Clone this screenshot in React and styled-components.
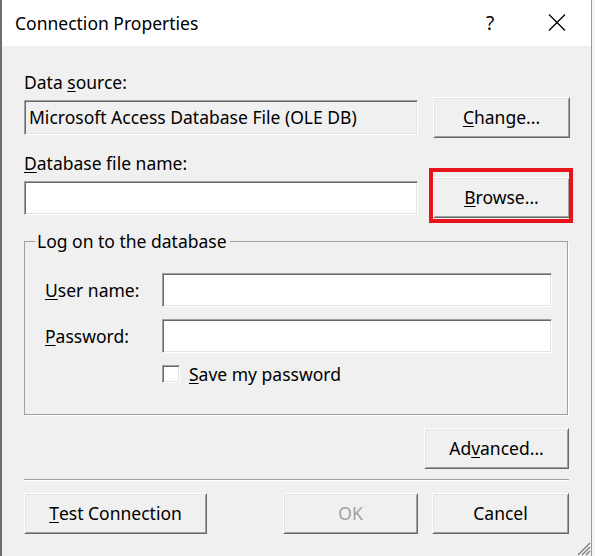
import React from "react";
import styled, { createGlobalStyle } from "styled-components";

const GlobalStyle = createGlobalStyle`
  html, body { margin: 0; padding: 0; background: #f4f4f4; }
  body {
    font-family: "Noto Sans", "Segoe UI", sans-serif;
    font-size: 17.5px;
    color: #000;
  }
  * { box-sizing: border-box; }
`;

const Window = styled.div`
  position: relative;
  display: flex;
  flex-direction: column;
  width: 592px;
  height: 556px;
  border-left: 2px solid #6e6e6e;
  border-right: 1px solid #9a9a9a;
  overflow: hidden;
`;

const TitleBar = styled.div`
  display: flex;
  align-items: center;
  height: 46px;
  background: #fff;
  padding-left: 13px;
  padding-bottom: 1px;
  flex-shrink: 0;
`;

const Title = styled.div`
  font-size: 17.5px;
  color: #000;
`;

const TitleActions = styled.div`
  margin-left: auto;
  display: flex;
  height: 100%;
`;

const TitleButton = styled.div`
  width: ${(p) => p.$w}px;
  display: flex;
  align-items: center;
  justify-content: center;
  font-size: 19px;
  color: #000;
`;

const Body = styled.div`
  flex: 1;
  background: #f0f0f0;
  padding: 26px 21px 0 22px;
  display: flex;
  flex-direction: column;
`;

const Label = styled.div`
  line-height: 20px;
  height: 20px;
  margin-top: ${(p) => p.$mt || 0}px;
  white-space: nowrap;
`;

const Mn = styled.span`
  text-decoration: underline;
  text-underline-offset: 2px;
  text-decoration-thickness: 1px;
`;

const FieldRow = styled.div`
  display: grid;
  grid-template-columns: 394px 1fr;
  column-gap: 15px;
  align-items: center;
  margin-top: ${(p) => p.$mt}px;
`;

const Field = styled.div`
  height: ${(p) => p.$h || 34}px;
  background: ${(p) => (p.$disabled ? "#f0f0f0" : "#fff")};
  border-top: 1px solid #a0a0a0;
  border-left: 1px solid #a0a0a0;
  border-bottom: 1px solid #fff;
  border-right: 1px solid #fff;
  box-shadow: inset 1px 1px 0 #696969, inset -1px -1px 0 #e3e3e3;
  display: flex;
  align-items: center;
  padding-left: 4px;
  padding-bottom: 1px;
  white-space: nowrap;
  overflow: hidden;
`;

const Button = styled.div`
  height: 41px;
  width: ${(p) => (p.$w ? `${p.$w}px` : "auto")};
  background: #f0f0f0;
  border-top: 1px solid #fff;
  border-left: 1px solid #fff;
  border-bottom: 1px solid #696969;
  border-right: 1px solid #696969;
  box-shadow: inset 1px 1px 0 #e3e3e3, inset -1px -1px 0 #a0a0a0;
  display: flex;
  align-items: center;
  justify-content: center;
  padding-bottom: 1px;
  color: ${(p) => (p.$disabled ? "#a0a0a0" : "#000")};
  white-space: nowrap;
`;

const Highlight = styled.div`
  position: relative;
  &::after {
    content: "";
    position: absolute;
    top: -9px;
    left: -4px;
    right: -3px;
    bottom: -5px;
    border: 4px solid #e8141c;
    pointer-events: none;
  }
`;

const Group = styled.fieldset`
  margin: 14px 2px 0 0;
  padding: 23px 15px 31px 20px;
  border: 1px solid #a0a0a0;
  box-shadow: 1px 1px 0 #fff;
  min-width: 0;
`;

const Legend = styled.legend`
  margin-left: -10px;
  padding: 0 3px 0 2px;
  line-height: 18px;
`;

const GroupGrid = styled.div`
  display: grid;
  grid-template-columns: 117px 390px;
  row-gap: 12px;
  align-items: center;
`;

const CheckRow = styled.label`
  grid-column: 2;
  display: flex;
  align-items: center;
  gap: 9px;
  height: 18px;
  line-height: 18px;
`;

const CheckBox = styled.span`
  width: 18px;
  height: 18px;
  flex-shrink: 0;
  background: #fff;
  border-top: 1px solid #a0a0a0;
  border-left: 1px solid #a0a0a0;
  border-bottom: 1px solid #fff;
  border-right: 1px solid #fff;
  box-shadow: inset 1px 1px 0 #696969, inset -1px -1px 0 #e3e3e3;
`;

const EndRow = styled.div`
  display: flex;
  justify-content: flex-end;
  margin-top: 13px;
  padding-right: 1px;
`;

const Separator = styled.div`
  margin-top: 10px;
  margin-right: 1px;
  border-top: 1px solid #a0a0a0;
  border-bottom: 1px solid #fff;
`;

const BottomRow = styled.div`
  display: flex;
  align-items: center;
  margin-top: 12px;
  padding-right: 1px;
`;

const ButtonGroup = styled.div`
  margin-left: auto;
  display: flex;
  gap: 14px;
`;

const Grip = styled.svg`
  position: absolute;
  right: 0;
  bottom: 0;
`;

export default function App() {
  return (
    <>
      <GlobalStyle />
      <Window>
        <TitleBar>
          <Title>Connection Properties</Title>
          <TitleActions>
            <TitleButton $w={66}>?</TitleButton>
            <TitleButton $w={68}>
              <svg width="18" height="17" viewBox="0 0 18 17">
                <path d="M1 0.5 L17 16.5 M17 0.5 L1 16.5" stroke="#000" strokeWidth="1.3" fill="none" />
              </svg>
            </TitleButton>
          </TitleActions>
        </TitleBar>
        <Body>
          <Label>
            Data <Mn>s</Mn>ource:
          </Label>
          <FieldRow $mt={5}>
            <Field $disabled $h={35}>Microsoft Access Database File (OLE DB)</Field>
            <Button>
              <Mn>C</Mn>hange...
            </Button>
          </FieldRow>
          <Label $mt={15}>
            <Mn>D</Mn>atabase file name:
          </Label>
          <FieldRow $mt={4}>
            <Field $h={34} />
            <Highlight>
              <Button>
                <Mn>B</Mn>rowse...
              </Button>
            </Highlight>
          </FieldRow>
          <Group>
            <Legend>Log on to the database</Legend>
            <GroupGrid>
              <Label>
                <Mn>U</Mn>ser name:
              </Label>
              <Field />
              <Label>
                <Mn>P</Mn>assword:
              </Label>
              <Field />
              <CheckRow>
                <CheckBox />
                <span>
                  <Mn>S</Mn>ave my password
                </span>
              </CheckRow>
            </GroupGrid>
          </Group>
          <EndRow>
            <Button $w={145}>
              Ad<Mn>v</Mn>anced...
            </Button>
          </EndRow>
          <Separator />
          <BottomRow>
            <Button $w={183}>
              <Mn>T</Mn>est Connection
            </Button>
            <ButtonGroup>
              <Button $w={135} $disabled>OK</Button>
              <Button $w={137}>Cancel</Button>
            </ButtonGroup>
          </BottomRow>
        </Body>
        <Grip width="16" height="16" viewBox="0 0 16 16">
          <path d="M15 3 L3 15 M15 7 L7 15 M15 11 L11 15" stroke="#7a7a7a" strokeWidth="1.2" />
        </Grip>
      </Window>
    </>
  );
}
